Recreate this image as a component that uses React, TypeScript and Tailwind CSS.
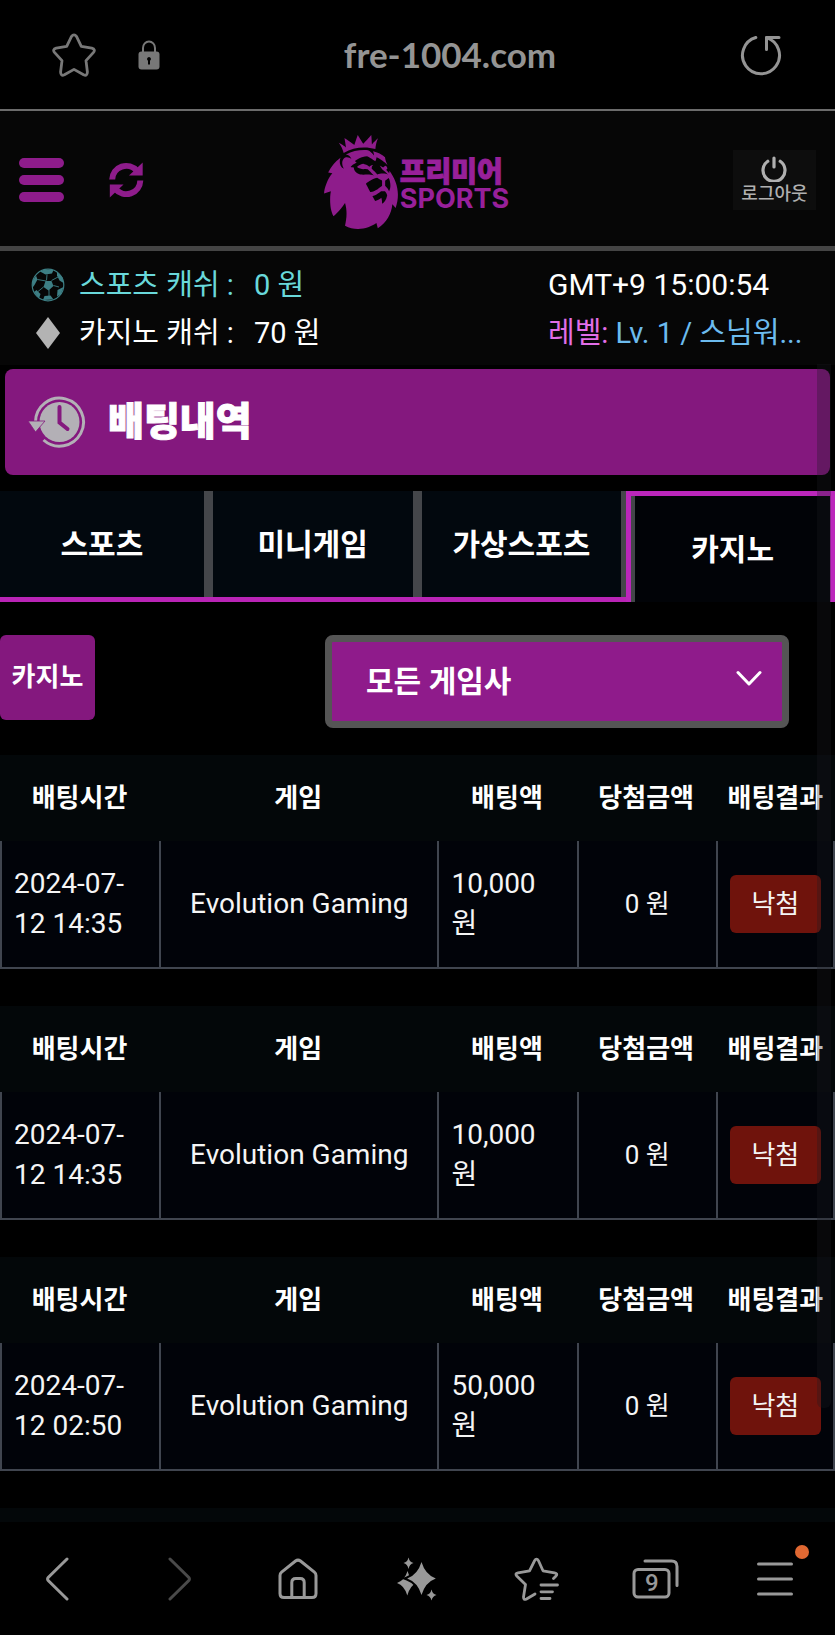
import React, { useState } from "react";
import { SiPremierleague } from "react-icons/si";

const tabs = ["스포츠", "미니게임", "가상스포츠", "카지노"];

const bets = [
  { id: 1, date: "2024-07-12 14:35", game: "Evolution Gaming", amount: "10,000 원", win: "0 원", result: "낙첨" },
  { id: 2, date: "2024-07-12 14:35", game: "Evolution Gaming", amount: "10,000 원", win: "0 원", result: "낙첨" },
  { id: 3, date: "2024-07-12 02:50", game: "Evolution Gaming", amount: "50,000 원", win: "0 원", result: "낙첨" },
];

const StarIcon = () => (
  <svg width="44" height="44" viewBox="0 0 44 44" fill="none" stroke="currentColor" strokeWidth="2.8" strokeLinejoin="round">
    <path d="M19.4 3.6Q22 0 24.6 3.6L29.3 13.4L39.8 15.2Q44 16.4 41.3 19.6L34 27.6L35.4 39Q35.4 43.4 31.6 41.8L22 36.4L12.4 41.8Q8.6 43.4 8.6 39L10 27.6L2.7 19.6Q0 16.4 4.2 15.2L14.7 13.4Z" />
  </svg>
);

const LockIcon = () => (
  <svg width="22" height="30" viewBox="0 0 22 30">
    <path d="M5 13V8a6 6.5 0 0 1 12 0v5" fill="none" stroke="currentColor" strokeWidth="2" />
    <rect x="0.5" y="11.5" width="21" height="18" rx="3" fill="currentColor" />
    <path d="M11 17a2 2 0 0 1 1 3.7V24.5h-2v-3.8A2 2 0 0 1 11 17Z" fill="#000" />
  </svg>
);

const ReloadIcon = () => (
  <svg width="42" height="42" viewBox="0 0 42 42" fill="none" stroke="currentColor" strokeWidth="3" strokeLinecap="round" strokeLinejoin="round">
    <path d="M15.8 3.5A18.5 18.5 0 1 0 26.5 3.6" />
    <path d="M39 3.5H26.5V15.5" />
  </svg>
);

const SyncIcon = () => (
  <svg width="35" height="36" viewBox="0 0 35 36" fill="currentColor">
    <path d="M3.2 17.5A14 14 0 0 1 28 9M31.3 18.5A14 14 0 0 1 6.5 27" fill="none" stroke="currentColor" strokeWidth="6" />
    <path d="M33.7 0.5V13.5H20Z" />
    <path d="M0.8 35.5V22.5H14.5Z" />
  </svg>
);

const PowerIcon = () => (
  <svg width="26" height="26" viewBox="0 0 26 26" fill="none" stroke="currentColor" strokeWidth="3.2" strokeLinecap="round">
    <path d="M6.8 5.3A11 11 0 1 0 19.2 5.3M13 2V11" />
  </svg>
);

const BallIcon = () => (
  <svg width="34" height="34" viewBox="0 0 34 34">
    <circle cx="17" cy="17" r="15.8" fill="none" stroke="currentColor" strokeWidth="1.2" />
    <g fill="currentColor">
      <path d="M14.5 13h6l2 5-5 4.5-5-3.5Z" />
      <path d="M9 3.5L13 1.5L22.5 2L21 5.5L14.5 6.5Z" />
      <path d="M26 4L31.5 9.5L32.5 15L28.5 12.5L26 7.5Z" />
      <path d="M32.5 19L30 26L26 28.5L26.5 22Z" />
      <path d="M22.5 31.5L12 32L13.5 28L19.5 27.5Z" />
      <path d="M8 30.5L3 24L5.5 22L9.5 26Z" />
      <path d="M1.3 20L1.5 13L5 7.5L6.5 11.5L3.5 17Z" />
    </g>
    <path d="M16 6.5L15.5 12.5M20.5 12.5L27 9M22.5 17.5L28 19M18 21.5V28M12.5 19L7 23.5M6.5 11.5L15 13" stroke="currentColor" strokeWidth="0.9" />
  </svg>
);

const DiamondIcon = () => (
  <svg width="26" height="34" viewBox="0 0 26 34">
    <path d="M13 1L25 17L13 33L1 17Z" fill="currentColor" />
  </svg>
);

const HistoryIcon = () => (
  <svg width="58" height="54" viewBox="0 0 58 54">
    <circle cx="31.5" cy="27" r="20" fill="currentColor" />
    <path d="M7.5 27A24 24 0 1 1 15.5 45" fill="none" stroke="currentColor" strokeWidth="3" />
    <path d="M0 26H17L7.5 37Z" fill="currentColor" stroke="#84187e" strokeWidth="0.8" />
    <path d="M31.5 12V27.5L39.5 34" fill="none" stroke="#84187e" strokeWidth="4" strokeLinecap="round" />
  </svg>
);

const BackIcon = () => (
  <svg width="28" height="44" viewBox="0 0 28 44" fill="none" stroke="currentColor" strokeWidth="3" strokeLinecap="round">
    <path d="M21 2L2.2 20.5Q1 22 2.2 23.5L21 42" />
  </svg>
);

const ForwardIcon = () => (
  <svg width="28" height="44" viewBox="0 0 28 44" fill="none" stroke="currentColor" strokeWidth="3" strokeLinecap="round">
    <path d="M5 2L23.8 20.5Q25 22 23.8 23.5L5 42" />
  </svg>
);

const HomeIcon = () => (
  <svg width="40" height="42" viewBox="0 0 40 42" fill="none" stroke="currentColor" strokeWidth="3" strokeLinejoin="round">
    <path d="M2 17.5Q2 15.5 3.6 14.2L17.5 3Q20 1.2 22.5 3L36.4 14.2Q38 15.5 38 17.5V35.5Q38 39.5 34 39.5H6Q2 39.5 2 35.5Z" />
    <path d="M13.8 39V24.5Q13.8 20.5 17.8 20.5H22.2Q26.2 20.5 26.2 24.5V39" />
  </svg>
);

const SparkleIcon = () => (
  <svg width="40" height="44" viewBox="0 0 40 44" fill="currentColor">
    <path d="M10.5 14Q13 23 19.5 26Q13 28.5 10.3 38.5Q7.5 28.5 0 26Q8 23 10.5 14Z" />
    <path
      d="M24.5 5Q28.3 17.7 38.8 21.5Q28.3 25.3 24.5 38Q20.7 25.3 10.2 21.5Q20.7 17.7 24.5 5Z"
      stroke="#000"
      strokeWidth="4"
      style={{ paintOrder: "stroke" }}
    />
    <path d="M11.5 0.5Q12.5 5 16.5 6Q12.5 7 11.5 12Q10.5 7 6.5 6Q10.5 5 11.5 0.5Z" />
    <path d="M34.5 32.5Q35.5 37 39.5 38Q35.5 39 34.5 43.5Q33.5 39 29.5 38Q33.5 37 34.5 32.5Z" />
  </svg>
);

const BookmarksIcon = () => (
  <svg width="46" height="44" viewBox="0 0 46 44" fill="none" stroke="currentColor" strokeWidth="2.8" strokeLinecap="round" strokeLinejoin="round">
    <path d="M39.5 21.5L42 19Q44 16.5 40.5 15.8L29 13.8L24.5 3.8Q22.5 0.5 20.5 3.8L15.5 13.8L4 15.8Q0.5 16.5 3 19.2L11.5 27.5L9.5 40Q9.5 43.5 12.5 42L21 37" />
    <path d="M27 28H43.5M27 34.8H38.5M27 41.5H36" />
  </svg>
);

const TabsIcon = () => (
  <svg width="48" height="42" viewBox="0 0 48 42" fill="none" stroke="currentColor" strokeWidth="3" strokeLinecap="round">
    <rect x="2" y="11.5" width="35" height="27.5" rx="4" />
    <path d="M13 3H39.5Q45 3 45 8.5V27.5" />
  </svg>
);

const MenuIcon = () => (
  <svg width="36" height="36" viewBox="0 0 36 36" stroke="currentColor" strokeWidth="3" strokeLinecap="round">
    <path d="M1.5 3H34.5M1.5 18H34.5M1.5 33H34.5" />
  </svg>
);

const ChevronIcon = () => (
  <svg width="26" height="18" viewBox="0 0 26 18" fill="none" stroke="currentColor" strokeWidth="3" strokeLinecap="round" strokeLinejoin="round">
    <path d="M2 2.5L13 14L24 2.5" />
  </svg>
);

const BetTable = ({ bet }: { bet: (typeof bets)[number] }) => (
  <table className="w-full table-fixed border-separate border-spacing-0 text-[26px]">
    <thead className="bg-[#030709]">
      <tr className="h-[86px] font-bold">
        <th>배팅시간</th>
        <th className="w-1/3">게임</th>
        <th className="w-1/6">배팅액</th>
        <th className="w-1/6">당첨금액</th>
        <th className="w-1/7 whitespace-nowrap">배팅결과</th>
      </tr>
    </thead>
    <tbody className="bg-[#010309] text-[#f5f5f5]">
      <tr className="h-[128px] text-center leading-10 *:border-b-2 *:border-l-2 *:border-[#40454f]">
        <td className="px-3 text-left text-[28px]">{bet.date}</td>
        <td className="px-3 text-[28px]">{bet.game}</td>
        <td className="px-3 text-left text-[28px]">{bet.amount}</td>
        <td className="px-3">{bet.win}</td>
        <td className="border-r-2 px-3">
          <span className="block rounded-md bg-[#6f130c] py-[9px]">{bet.result}</span>
        </td>
      </tr>
    </tbody>
  </table>
);

const App: React.FC = () => {
  const [activeTab, setActiveTab] = useState("카지노");

  return (
    <div className="relative flex min-h-screen flex-col bg-black font-['Roboto','Noto_Sans_CJK_KR',sans-serif] text-white">
      {/* Browser bar */}
      <div className="flex h-[111px] items-center border-b-2 border-[#6b6b6b] pr-[53px] pl-[52px] text-[#787878]">
        <button aria-label="즐겨찾기">
          <StarIcon />
        </button>
        <span className="ml-[42px]">
          <LockIcon />
        </span>
        <span className="flex-1 text-center font-['Lato',sans-serif] text-[35px] font-bold text-[#949494]">
          fre-1004.com
        </span>
        <button aria-label="새로고침" className="text-[#949494]">
          <ReloadIcon />
        </button>
      </div>

      {/* Site header */}
      <header className="grid h-[140px] grid-cols-3 items-center border-b-5 border-[#444444] bg-[#060606] px-[19px] pt-0.5 text-[#8e1c8b]">
        <div className="flex items-center gap-[45px]">
          <button aria-label="메뉴" className="flex w-[45px] flex-col gap-[7px]">
            <span className="h-[10px] rounded-full bg-current" />
            <span className="h-[10px] rounded-full bg-current" />
            <span className="h-[10px] rounded-full bg-current" />
          </button>
          <button aria-label="동기화">
            <SyncIcon />
          </button>
        </div>
        <a href="#" className="flex items-center justify-center pt-1 pr-3">
          <SiPremierleague size={94} className="-mr-2 shrink-0" />
          <span className="flex flex-col pt-2 text-[#98209a]">
            <span className="text-[28px] leading-[26px] font-black [-webkit-text-stroke:1px]">프리미어</span>
            <span className="font-['Inter',sans-serif] text-[27px] leading-[26px] font-bold">SPORTS</span>
          </span>
        </a>
        <button className="flex h-[60px] w-[83px] flex-col items-center justify-center gap-0.5 justify-self-end bg-[#0d0d0d] text-[18px] leading-5 font-medium text-[#b0b0b0]">
          <PowerIcon />
          로그아웃
        </button>
      </header>

      {/* Member info */}
      <section className="grid h-[114px] grid-cols-[1fr_287px] items-center bg-[#060606] pt-0.5 text-[29px] leading-[48px] whitespace-nowrap">
        <div className="pl-[30px]">
          <div className="flex items-center text-[#69d8da]">
            <span className="flex w-[49px] pl-px text-[#3d7f85]">
              <BallIcon />
            </span>
            <span className="w-[175px]">스포츠 캐쉬 :</span>
            <span>0 원</span>
          </div>
          <div className="flex items-center">
            <span className="flex w-[49px] pl-[5px] text-[#b3b3b3]">
              <DiamondIcon />
            </span>
            <span className="w-[175px]">카지노 캐쉬 :</span>
            <span>70 원</span>
          </div>
        </div>
        <div>
          <div className="text-[30px]">GMT+9 15:00:54</div>
          <div className="text-[#6cbbee]">
            <span className="text-[#e26ee8]">레벨:</span> Lv. 1 / 스님워...
          </div>
        </div>
      </section>

      <main className="flex flex-1 flex-col">
        <h1 className="mx-[5px] mt-1 flex h-[106px] items-center gap-[22px] rounded-lg bg-[#84187e] pl-[23px] text-[39px] font-black [-webkit-text-stroke:1px]">
          <span className="text-[#b3b0b6]">
            <HistoryIcon />
          </span>
          배팅내역
        </h1>

        <nav className="mt-4 grid h-[111px] grid-cols-4 text-[30px] font-bold">
          {tabs.map((tab, index) => (
            <button
              key={tab}
              onClick={() => setActiveTab(tab)}
              className={
                tab === activeTab
                  ? "border-x-5 border-t-5 border-[#bb26bb] bg-[#010307]"
                  : "border-b-5 border-[#b924b5] bg-[#02080e]"
              }
            >
              <span
                className={
                  tab === activeTab
                    ? "flex h-full items-center justify-center border-l-4 border-[#44464a]"
                    : index === 0
                      ? "flex h-full items-center justify-center border-r-5 border-[#44464a]"
                      : "flex h-full items-center justify-center border-r-5 border-l-4 border-[#44464a]"
                }
              >
                {tab}
              </span>
            </button>
          ))}
        </nav>

        <div className="mt-[33px] mb-[27px] flex items-start justify-between pr-[46px] font-bold">
          <button className="h-[85px] w-[95px] rounded-md bg-[#84187e] text-[26px]">카지노</button>
          <div className="relative w-[464px]">
            <select
              aria-label="게임사"
              className="h-[93px] w-full appearance-none rounded-lg border-7 border-[#555555] bg-[#8f1b8b] pl-[34px] text-[30px] font-bold"
            >
              <option>모든 게임사</option>
            </select>
            <span className="pointer-events-none absolute top-[35px] right-[27px]">
              <ChevronIcon />
            </span>
          </div>
        </div>

        <div className="flex flex-col gap-[37px]">
          {bets.map((bet) => (
            <BetTable key={bet.id} bet={bet} />
          ))}
          <div className="h-[14px] bg-[#030709]" />
        </div>
      </main>

      {/* Browser toolbar */}
      <footer className="grid h-28 grid-cols-7 items-center justify-items-center text-[#999999]">
        <button aria-label="뒤로">
          <BackIcon />
        </button>
        <button aria-label="앞으로" className="text-[#4a4a4a]">
          <ForwardIcon />
        </button>
        <button aria-label="홈">
          <HomeIcon />
        </button>
        <button aria-label="AI">
          <SparkleIcon />
        </button>
        <button aria-label="북마크">
          <BookmarksIcon />
        </button>
        <button aria-label="탭" className="relative">
          <TabsIcon />
          <span className="absolute top-[13px] left-[13px] text-[24px] leading-6 font-medium">9</span>
        </button>
        <button aria-label="더보기" className="relative">
          <MenuIcon />
          <span className="absolute -top-4 -right-4 size-[14px] rounded-full bg-[#e06832]" />
        </button>
      </footer>

      {/* Edge panel handle */}
      <div className="pointer-events-none absolute top-[364px] right-1 h-[1044px] w-[14px] rounded-b-md bg-[#1a1a20]/30" />
    </div>
  );
};

export default App;
